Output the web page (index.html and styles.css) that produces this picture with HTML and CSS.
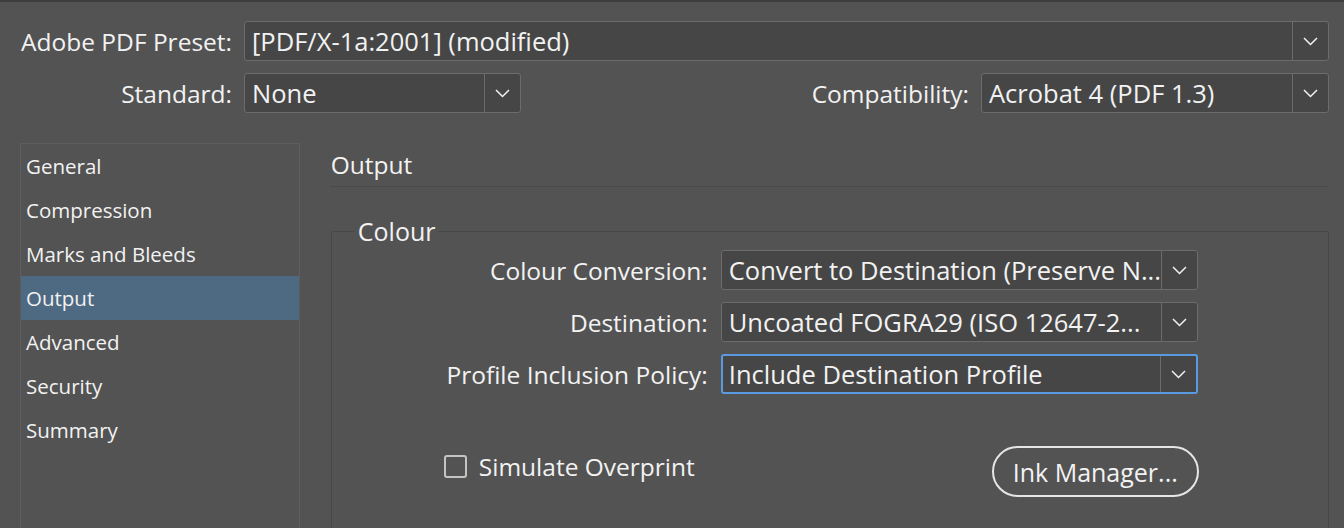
FILE: index.html
```html
<!DOCTYPE html>
<html lang="en">
<head>
  <meta charset="UTF-8" />
  <title>Export Adobe PDF</title>
  <link rel="stylesheet" href="styles.css">
</head>
<body>
  <div class="dialog">
    <div class="top">
      <div class="row">
        <label class="label wide">Adobe PDF Preset:</label>
        <div class="select grow">
          <span class="value">[PDF/X-1a:2001] (modified)</span>
          <span class="arrow"><svg width="15" height="9" viewBox="0 0 15 9"><polyline points="1,1 7.5,7.5 14,1" /></svg></span>
        </div>
      </div>
      <div class="row">
        <label class="label wide">Standard:</label>
        <div class="select standard">
          <span class="value">None</span>
          <span class="arrow"><svg width="15" height="9" viewBox="0 0 15 9"><polyline points="1,1 7.5,7.5 14,1" /></svg></span>
        </div>
        <label class="label compat">Compatibility:</label>
        <div class="select compat-select">
          <span class="value">Acrobat 4 (PDF 1.3)</span>
          <span class="arrow"><svg width="15" height="9" viewBox="0 0 15 9"><polyline points="1,1 7.5,7.5 14,1" /></svg></span>
        </div>
      </div>
    </div>

    <div class="main">
      <ul class="nav">
        <li>General</li>
        <li>Compression</li>
        <li>Marks and Bleeds</li>
        <li class="active">Output</li>
        <li>Advanced</li>
        <li>Security</li>
        <li>Summary</li>
      </ul>

      <div class="panel">
        <h2>Output</h2>
        <fieldset>
          <legend>Colour</legend>
          <div class="fields">
            <label class="label">Colour Conversion:</label>
            <div class="select">
              <span class="value">Convert to Destination (Preserve N...</span>
              <span class="arrow"><svg width="15" height="9" viewBox="0 0 15 9"><polyline points="1,1 7.5,7.5 14,1" /></svg></span>
            </div>
            <label class="label">Destination:</label>
            <div class="select">
              <span class="value">Uncoated FOGRA29 (ISO 12647-2...</span>
              <span class="arrow"><svg width="15" height="9" viewBox="0 0 15 9"><polyline points="1,1 7.5,7.5 14,1" /></svg></span>
            </div>
            <label class="label">Profile Inclusion Policy:</label>
            <div class="select focused">
              <span class="value">Include Destination Profile</span>
              <span class="arrow"><svg width="15" height="9" viewBox="0 0 15 9"><polyline points="1,1 7.5,7.5 14,1" /></svg></span>
            </div>
          </div>
          <div class="bottom">
            <label class="check"><span class="box"></span>Simulate Overprint</label>
            <button class="ink">Ink Manager...</button>
          </div>
        </fieldset>
      </div>
    </div>
  </div>
</body>
</html>
```

FILE: styles.css
```css
html, body {
  margin: 0;
  height: 100%;
  overflow: hidden;
}

body {
  background: #535353;
  color: #f2f2f2;
  font-family: 'Open Sans', 'Noto Sans', sans-serif;
  font-size: 24.5px;
  border-top: 2px solid #3d3d3d;
  box-sizing: border-box;
}

.dialog {
  padding: 19px 15px 0 10px;
}

.row {
  display: flex;
  align-items: center;
  gap: 12px;
  margin-bottom: 12px;
}

.label {
  text-align: right;
  white-space: nowrap;
}

.label.wide {
  width: 222px;
}

.label.compat {
  margin-left: auto;
}

.select {
  display: flex;
  height: 40px;
  box-sizing: border-box;
  background: #464646;
  border: 1px solid #6c6c6c;
  border-radius: 3px;
}

.select.grow { flex: 1; }
.select.standard { width: 277px; }
.select.compat-select { width: 348px; }

.select.focused {
  border: 2px solid #5a9ae0;
}

.value {
  flex: 1;
  padding-left: 7px;
  font-size: 25.5px;
  line-height: 38px;
  white-space: nowrap;
  overflow: hidden;
}

.focused .value {
  padding-left: 6px;
  line-height: 36px;
}

.arrow {
  width: 35px;
  border-left: 1px solid #6c6c6c;
  display: flex;
  align-items: center;
  justify-content: center;
}

.arrow polyline {
  fill: none;
  stroke: #f2f2f2;
  stroke-width: 1.5;
}

.main {
  display: flex;
  margin-top: 30px;
  margin-left: 10px;
}

.nav {
  list-style: none;
  margin: 0;
  padding: 0;
  width: 278px;
  height: 420px;
  border: 1px solid #5e5e5e;
  font-size: 20.5px;
}

.nav li {
  height: 44px;
  line-height: 44px;
  padding-left: 5px;
}

.nav li.active {
  background: #4e6982;
}

.panel {
  width: 1000px;
  margin-left: 30px;
}

h2 {
  margin: 0;
  font-weight: normal;
  font-size: 24.5px;
  height: 43px;
  line-height: 44px;
  padding-left: 1px;
  border-bottom: 1px solid #4a4a4a;
}

fieldset {
  margin: 30px 0 0 1px;
  padding: 5px 0 0 0;
  height: 400px;
  border: 1px solid #474747;
  border-radius: 2px;
}

legend {
  margin-left: 22px;
  padding: 0 4px;
  font-size: 25px;
  line-height: 28px;
}

.fields {
  display: grid;
  grid-template-columns: 376px 477px;
  column-gap: 13px;
  row-gap: 12px;
  align-items: center;
}

.bottom {
  display: flex;
  align-items: center;
  justify-content: space-between;
  width: 755px;
  margin: 52px 0 0 112px;
}

.check {
  display: flex;
  align-items: center;
  gap: 12px;
  margin-bottom: 10px;
}

.box {
  width: 19px;
  height: 19px;
  border: 2px solid #c4c4c4;
  border-radius: 3px;
}

.ink {
  height: 51px;
  padding: 0 19px;
  border: 2px solid #e6e6e6;
  border-radius: 26px;
  background: transparent;
  color: #f2f2f2;
  font-family: inherit;
  font-size: 25px;
}
```
